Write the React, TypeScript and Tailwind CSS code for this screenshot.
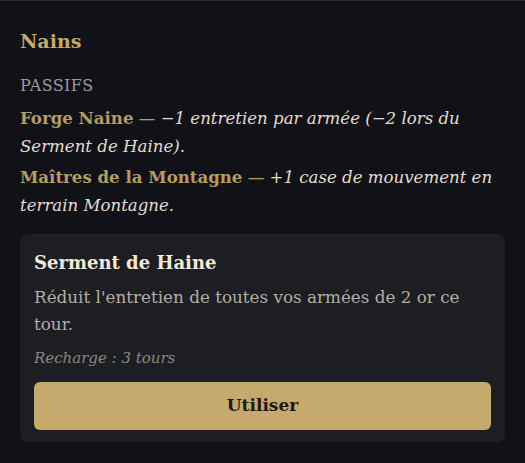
const serif = { fontFamily: '"DejaVu Serif", "Liberation Serif", serif' };

const passives = [
  {
    name: 'Forge Naine',
    effect: '−1 entretien par armée (−2 lors du Serment de Haine).',
  },
  {
    name: 'Maîtres de la Montagne',
    effect: '+1 case de mouvement en terrain Montagne.',
  },
];

function AbilityCard() {
  return (
    <div className="mt-[14px] rounded-lg bg-[#1d1e23] px-[14px] pt-4 pb-3">
      <h3 className="text-[18px] leading-[26px] font-bold text-[#f2ead9]">Serment de Haine</h3>
      <p className="mt-2 text-[16.8px] leading-[27px] text-[#b3ada2]">
        Réduit l'entretien de toutes vos armées de 2 or ce tour.
      </p>
      <p className="mt-[10px] text-[15px] leading-5 italic text-[#8a867e]">Recharge : 3 tours</p>
      <button className="mt-[14px] flex h-12 w-full items-center justify-center rounded-md bg-[#c6a96c] text-[17px] font-bold text-[#1a1a1c]">
        Utiliser
      </button>
    </div>
  );
}

export default function App() {
  return (
    <div style={serif} className="min-h-screen border-t border-[#2a2c34] bg-[#111217] px-5 pt-[26px]">
      <h2 className="text-[19px] leading-[28px] font-bold text-[#c9a86a]">Nains</h2>
      <div className="mt-5 text-[16px] leading-[22px] tracking-wide text-[#9c9a96]">PASSIFS</div>
      <div className="mt-[7px] flex flex-col gap-0.5">
        {passives.map((p) => (
          <p key={p.name} className="text-[16.6px] leading-[28px] text-[#e3dccf]">
            <span className="font-bold text-[#b89a63]">{p.name}</span>
            <span className="text-[#b89a63]"> — </span>
            <span className="italic">{p.effect}</span>
          </p>
        ))}
      </div>
      <AbilityCard />
    </div>
  );
}
